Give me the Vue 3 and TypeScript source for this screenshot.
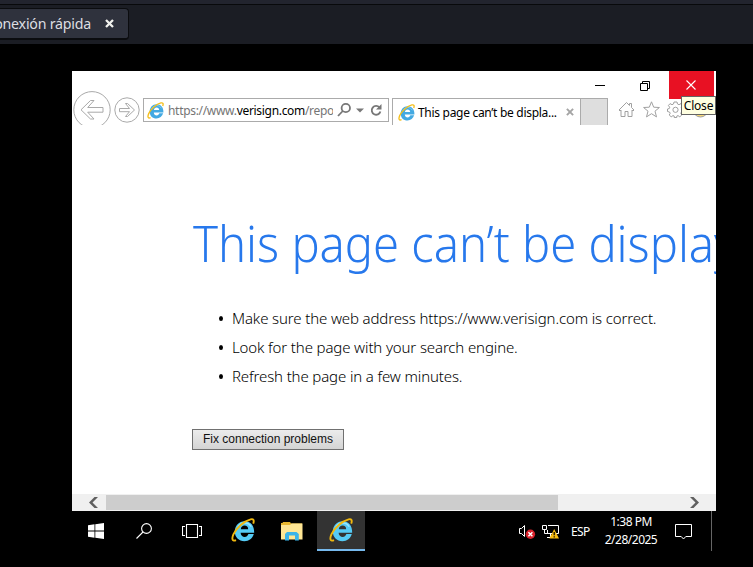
<script setup lang="ts">
import { defineComponent, h } from 'vue'

const tips: string[] = [
  'Make sure the web address https://www.verisign.com is correct.',
  'Look for the page with your search engine.',
  'Refresh the page in a few minutes.',
]

const IeLogo = defineComponent({
  props: { light: Boolean },
  setup(props) {
    return () =>
      h('svg', { viewBox: '0 0 24 24' }, [
        h('path', {
          d: 'M22.8 16C21.6 20.4 18 23.2 13.4 23.2C7.8 23.2 3.8 19.4 3.8 13.6C3.8 7.8 8 3.3 13.6 3.3C19.6 3.3 23.4 7.6 23.2 14.8H9.6C9.8 17.4 11.4 19 13.8 19C15.4 19 16.6 17.9 17.4 16ZM9.8 11.2H17.2C17.1 9 15.8 7.6 13.6 7.6C11.5 7.6 10.1 9 9.8 11.2Z',
          fill: props.light ? '#43a9e2' : '#55cbf6',
          'fill-rule': 'evenodd',
        }),
        h('path', {
          d: 'M6.4 10.4C7.6 7 10.2 5 13.6 5C16.6 5 19 6.4 20.2 8.8',
          fill: 'none',
          stroke: props.light ? '#86cef0' : '#9ae6fc',
          'stroke-width': 1.3,
        }),
        h('path', {
          d: 'M5 22.2C1.4 23.8 .4 21 2.4 16.4C5.2 9.8 13.4 2.8 19.6 1.3C22.6 .6 23.4 2.4 22.2 5.6',
          fill: 'none',
          stroke: props.light ? '#f5bf1c' : '#f0b80f',
          'stroke-width': 1.9,
        }),
      ])
  },
})
</script>

<template>
  <div class="viewer">
    <header class="host-bar">
      <div class="host-tab">
        <span class="host-label">Conexión rápida</span>
        <svg class="host-close" viewBox="0 0 9 9"><path d="M1 1L8 8M8 1L1 8" /></svg>
      </div>
    </header>

    <main class="desktop">
      <section class="window">
        <div class="caption">
          <svg class="cap" viewBox="0 0 45 28"><path d="M16 14.5H26" /></svg>
          <svg class="cap" viewBox="0 0 45 28"><path d="M16.5 12.5H23.5V19.5H16.5ZM18.5 12.5V10.5H25.5V17.5H23.5" /></svg>
          <svg class="cap close" viewBox="0 0 45 28"><path d="M17.5 9.5L26.5 18.5M26.5 9.5L17.5 18.5" /></svg>
          <span class="tooltip">Close</span>
        </div>

        <div class="toolbar">
          <svg class="back" viewBox="0 0 38 38">
            <circle cx="19" cy="18.8" r="18.2" />
            <path d="M8 18.8L17.5 9.5H21L14.7 16.5H30V21.2H14.7L21 28H17.5Z" />
          </svg>
          <svg class="forward" viewBox="0 0 26 26">
            <circle cx="13" cy="13" r="12.2" />
            <path d="M20.5 13L13.5 6.5H11.5L15.5 11.5H5.5V14.7H15.5L11.5 19.5H13.5Z" />
          </svg>
          <div class="address">
            <IeLogo class="ie-small" light />
            <span class="url">https://www.<b>verisign.com</b>/repo</span>
            <svg class="address-tools" viewBox="0 0 48 16">
              <circle cx="8.8" cy="6" r="4.2" />
              <path d="M5.8 9L1 14" />
              <path class="solid" d="M19 6.5H27L23 10.5Z" />
              <path d="M42.5 5.5A4.4 4.4 0 1 0 43.4 9.5" />
              <path class="solid" d="M44.5 2V7.5H39Z" />
            </svg>
          </div>
          <div class="page-tab">
            <IeLogo class="ie-small" light />
            <span class="tab-title">This page can’t be displa...</span>
            <svg class="tab-close" viewBox="0 0 9 9"><path d="M1 1L8 8M8 1L1 8" /></svg>
          </div>
          <div class="new-tab"></div>
          <div class="commands">
            <svg viewBox="0 0 17 17"><path d="M1 9L8.5 1.5L11.5 4.5V2.5H13.5V6.5L16 9L15 10L14 9V15.5H10V10.5H7V15.5H3V9L2 10Z" /></svg>
            <svg viewBox="0 0 17 17"><path d="M8.5 .8L10.7 6.2L16.4 6.5L12 10.2L13.5 15.9L8.5 12.7L3.5 15.9L5 10.2L.6 6.5L6.3 6.2Z" /></svg>
            <svg viewBox="0 0 17 17">
              <path d="M7 1H10L10.5 3L12 3.7L14 2.6L15.6 4.6L14.3 6.2L14.7 7.5L16.5 8V10.5L14.5 11L13.8 12.3L14.8 14L12.8 15.8L11 14.6L9.8 15V16.5H7.2V15L6 14.6L4.2 15.8L2.2 14L3.2 12.3L2.5 11L.5 10.5V8L2.3 7.5L2.7 6.2L1.4 4.6L3 2.6L5 3.7L6.5 3Z" />
              <circle cx="8.5" cy="8.8" r="2.6" />
            </svg>
            <svg class="smile" viewBox="0 0 17 17"><circle cx="8.5" cy="8.5" r="7.5" /><path d="M5 10Q8.5 14 12 10" /></svg>
          </div>
        </div>

        <article class="page">
          <h1>This page can’t be displayed</h1>
          <ul>
            <li v-for="tip in tips" :key="tip">{{ tip }}</li>
          </ul>
          <button type="button" class="fix"><span>Fix connection problems</span></button>
        </article>

        <div class="scrollbar">
          <svg class="arrow" viewBox="0 0 34 17"><path d="M26 3H22.5L17 8.5L22.5 14H26L20.5 8.5Z" /></svg>
          <div class="thumb"></div>
          <svg class="arrow right" viewBox="0 0 34 17"><path d="M8 3H11.5L17 8.5L11.5 14H8L13.5 8.5Z" /></svg>
        </div>
      </section>

      <footer class="taskbar">
        <div class="task">
          <svg class="i16" viewBox="0 0 16 16"><path fill="#fff" d="M0 2.2L6.5 1.3V7.5H0ZM7.3 1.2L16 0V7.5H7.3ZM0 8.4H6.5V14.7L0 13.8ZM7.3 8.4H16V16L7.3 14.8Z" /></svg>
        </div>
        <div class="task">
          <svg class="i16 line" viewBox="0 0 16 16"><circle cx="10.5" cy="5.5" r="4.9" /><path d="M7 9L.5 15.5" /></svg>
        </div>
        <div class="task">
          <svg class="i20 line" viewBox="0 0 20 16"><path d="M4.5 1.5H15.5V14.5H4.5ZM3 3.5H.5V12.5H3M17 3.5H19.5V12.5H17" /></svg>
        </div>
        <div class="task spaced"><IeLogo class="ie-large" /></div>
        <div class="task folder">
          <svg class="i22" viewBox="0 0 22 19">
            <path fill="#e9b72f" d="M0 1H1.5L2 0H9L10 1.5H21V6H0Z" />
            <path fill="#ffe694" d="M0 3H9L10.5 1.5H21.5V17.5H0Z" />
            <path fill="#3bb4e8" d="M4 18.5V12L6 10H15.5L17.8 12V18.5H14V13.5H8V18.5Z" />
          </svg>
        </div>
        <div class="task active"><IeLogo class="ie-large" /></div>

        <div class="tray">
          <svg class="sound" viewBox="0 0 18 18">
            <path d="M1.5 6.5H3.5L6.5 3.5V14.5L3.5 11.5H1.5Z" fill="none" stroke="#fff" />
            <circle cx="12.4" cy="12.2" r="4.7" fill="#d9222c" />
            <path d="M10.4 10.2L14.4 14.2M14.4 10.2L10.4 14.2" stroke="#fff" stroke-width="1.4" />
          </svg>
          <svg class="network" viewBox="0 0 18 18">
            <path d="M6 3.5H16.5V11.5H5.5V8M5 15.5H12M8.5 12V15M.5 3.5H4.5V7.5H.5ZM2.5 7.5V11.5H6" fill="none" stroke="#fff" />
            <path d="M12.2 7L17 16.5H7.4Z" fill="#f8bd12" />
            <path d="M12.2 10V13.2M12.2 14.2V15.4" stroke="#000" stroke-width="1.2" />
          </svg>
          <span class="lang">ESP</span>
          <div class="clock"><span>1:38 PM</span><span class="date">2/28/2025</span></div>
          <svg class="action" viewBox="0 0 17 17"><path d="M.5 1.5H16.5V13.5H10.8L8.5 16L6.2 13.5H.5Z" fill="none" stroke="#fff" /></svg>
          <i class="peek"></i>
        </div>
      </footer>
    </main>
  </div>
</template>

<style>
body {
  background: #000;
  overflow: hidden;
}
</style>

<style scoped>
.viewer {
  width: 753px;
  height: 567px;
  overflow: hidden;
  background: #000;
  font-family: "Noto Sans", "Open Sans", sans-serif;
}
.viewer * {
  box-sizing: border-box;
}
svg {
  display: block;
  flex: none;
}
.host-bar {
  height: 44px;
  padding-top: 4px;
  background: linear-gradient(#22242e 4px, #08090b 4px, #08090b 5px, #1b1d24 5px);
}
.host-tab {
  display: flex;
  justify-content: flex-end;
  align-items: center;
  width: 129px;
  height: 32px;
  margin-top: 4px;
  padding: 0 14px 1px 0;
  gap: 14px;
  background: #2f323d;
  border: 1px solid #0b0c0f;
  border-bottom-width: 2px;
  border-left: 0;
  border-radius: 0 4px 4px 0;
  color: #dddee1;
}
.host-label {
  font: 14.2px "Noto Sans", sans-serif;
  white-space: nowrap;
  letter-spacing: -0.22px;
}
.host-close {
  width: 9px;
  height: 9px;
  stroke: #f2f2ee;
  stroke-width: 2.3;
}
.desktop {
  width: 644px;
  margin: 27px 0 0 72px;
}
.window {
  height: 440px;
  background: #fff;
  overflow: hidden;
}
.caption {
  position: relative;
  display: flex;
  justify-content: flex-end;
  height: 28px;
  padding-right: 2px;
}
.cap {
  width: 45px;
  height: 28px;
  fill: none;
  stroke: #000;
}
.cap.close {
  background: #e81123;
  stroke: #fff;
  stroke-width: 1.1;
}
.tooltip {
  position: absolute;
  z-index: 2;
  top: 25px;
  right: 0;
  width: 35px;
  height: 19px;
  border: 1px solid #646464;
  background: #ffffe1;
  font-size: 12px;
  line-height: 17px;
  text-align: center;
  letter-spacing: -0.2px;
}
.toolbar {
  display: flex;
  align-items: flex-start;
  height: 34px;
  margin-top: -8px;
  overflow: hidden;
}
.back,
.forward {
  fill: #fff;
  stroke: #a9a9a9;
  stroke-width: 1;
}
.back {
  width: 38px;
  height: 38px;
  margin-left: 1px;
}
.forward {
  width: 26px;
  height: 26px;
  margin: 6px 3px 0;
}
.address {
  display: flex;
  align-items: center;
  width: 246px;
  height: 24px;
  margin-top: 7px;
  padding: 0 3px 0 3px;
  border: 1px solid #ababab;
}
.ie-small {
  width: 17px;
  height: 17px;
}
.url {
  flex: 1;
  margin: 0 4px 0 4px;
  overflow: hidden;
  white-space: nowrap;
  font-size: 12px;
  letter-spacing: -0.31px;
  color: #757575;
}
.url b {
  font-weight: 400;
  color: #000;
}
.address-tools {
  width: 48px;
  height: 16px;
  fill: none;
  stroke: #777;
  stroke-width: 1.8;
}
.address-tools .solid {
  fill: #777;
  stroke: none;
}
.page-tab {
  display: flex;
  align-items: center;
  width: 188px;
  height: 27px;
  margin: 7px 0 0 3px;
  padding: 0 6px 0 5px;
  border: solid #ababab;
  border-width: 1px 0 0 1px;
}
.tab-title {
  flex: 1;
  margin-left: 3px;
  white-space: nowrap;
  font-size: 12px;
  letter-spacing: -0.3px;
  color: #000;
}
.tab-close {
  width: 8px;
  height: 8px;
  stroke: #a5a5a5;
  stroke-width: 2.2;
}
.new-tab {
  width: 28px;
  height: 27px;
  margin-top: 7px;
  border: solid #ababab;
  border-width: 1px 1px 0;
  background: #dedede;
}
.commands {
  display: flex;
  gap: 7.5px;
  margin: 10px 0 0 10px;
}
.commands svg {
  width: 17px;
  height: 17px;
  fill: #fff;
  stroke: #a0a0a0;
}
.commands .smile {
  fill: #f5d878;
}
.page {
  height: 369px;
  padding: 84px 0 0 120px;
}
h1 {
  margin: 0;
  width: 800px;
  color: #2778ec;
  font-weight: 300;
  font-size: 50px;
  line-height: 68px;
  transform: translateX(1px) scaleX(0.942);
  transform-origin: 0 0;
  white-space: nowrap;
}
ul {
  margin: 27px 0 0;
  padding-left: 40px;
  list-style: none;
}
li {
  position: relative;
  height: 29px;
  font-weight: 300;
  font-size: 15px;
  line-height: 29px;
  letter-spacing: -0.13px;
  color: #000;
  white-space: nowrap;
}
li::before {
  content: "";
  position: absolute;
  left: -13px;
  top: 12px;
  width: 4px;
  height: 5px;
  border-radius: 50%;
  background: #000;
}
.fix {
  display: block;
  width: 152px;
  height: 21px;
  margin-top: 38px;
  padding: 0;
  border: 1px solid #707070;
  background: linear-gradient(#ececec, #d4d4d4);
  font: 12px "Liberation Sans", sans-serif;
  line-height: 18px;
  color: #111;
}
.fix span {
  position: relative;
  top: -1px;
}
.scrollbar {
  display: flex;
  height: 17px;
  padding: 1px 0;
  background: #f0f0f0;
}
.arrow {
  width: 34px;
  height: 17px;
  margin-top: -1px;
  fill: #606060;
}
.thumb {
  width: 452px;
  height: 15px;
  background: #cdcdcd;
}
.arrow.right {
  margin-left: auto;
}
.taskbar {
  display: flex;
  height: 40px;
}
.task {
  display: flex;
  align-items: center;
  justify-content: center;
  width: 48px;
  height: 40px;
}
.task.spaced {
  margin-left: 3px;
}
.task.folder {
  margin: 0 1px;
}
.task.active {
  background: #333;
  box-shadow: inset 0 -2px #76b9ed;
}
.i16 {
  width: 16px;
  height: 16px;
}
.i20 {
  width: 20px;
  height: 16px;
}
.i22 {
  width: 22px;
  height: 19px;
}
.line {
  fill: none;
  stroke: #fff;
  stroke-width: 1.1;
}
.ie-large {
  width: 24px;
  height: 24px;
  margin-bottom: 2px;
}
.tray {
  display: flex;
  align-items: center;
  margin-left: 153px;
  color: #fff;
  font-size: 12px;
}
.sound,
.network {
  width: 18px;
  height: 18px;
}
.network {
  margin-left: 6px;
}
.lang {
  width: 20px;
  margin-left: 11px;
  letter-spacing: -0.6px;
}
.clock {
  display: flex;
  flex-direction: column;
  width: 64px;
  margin-left: 8px;
  text-align: center;
  line-height: 18px;
  letter-spacing: -0.5px;
}
.action {
  width: 17px;
  height: 17px;
  margin-left: 12px;
}
.peek {
  width: 1px;
  height: 40px;
  margin-left: 19px;
  background: #666;
}
</style>
